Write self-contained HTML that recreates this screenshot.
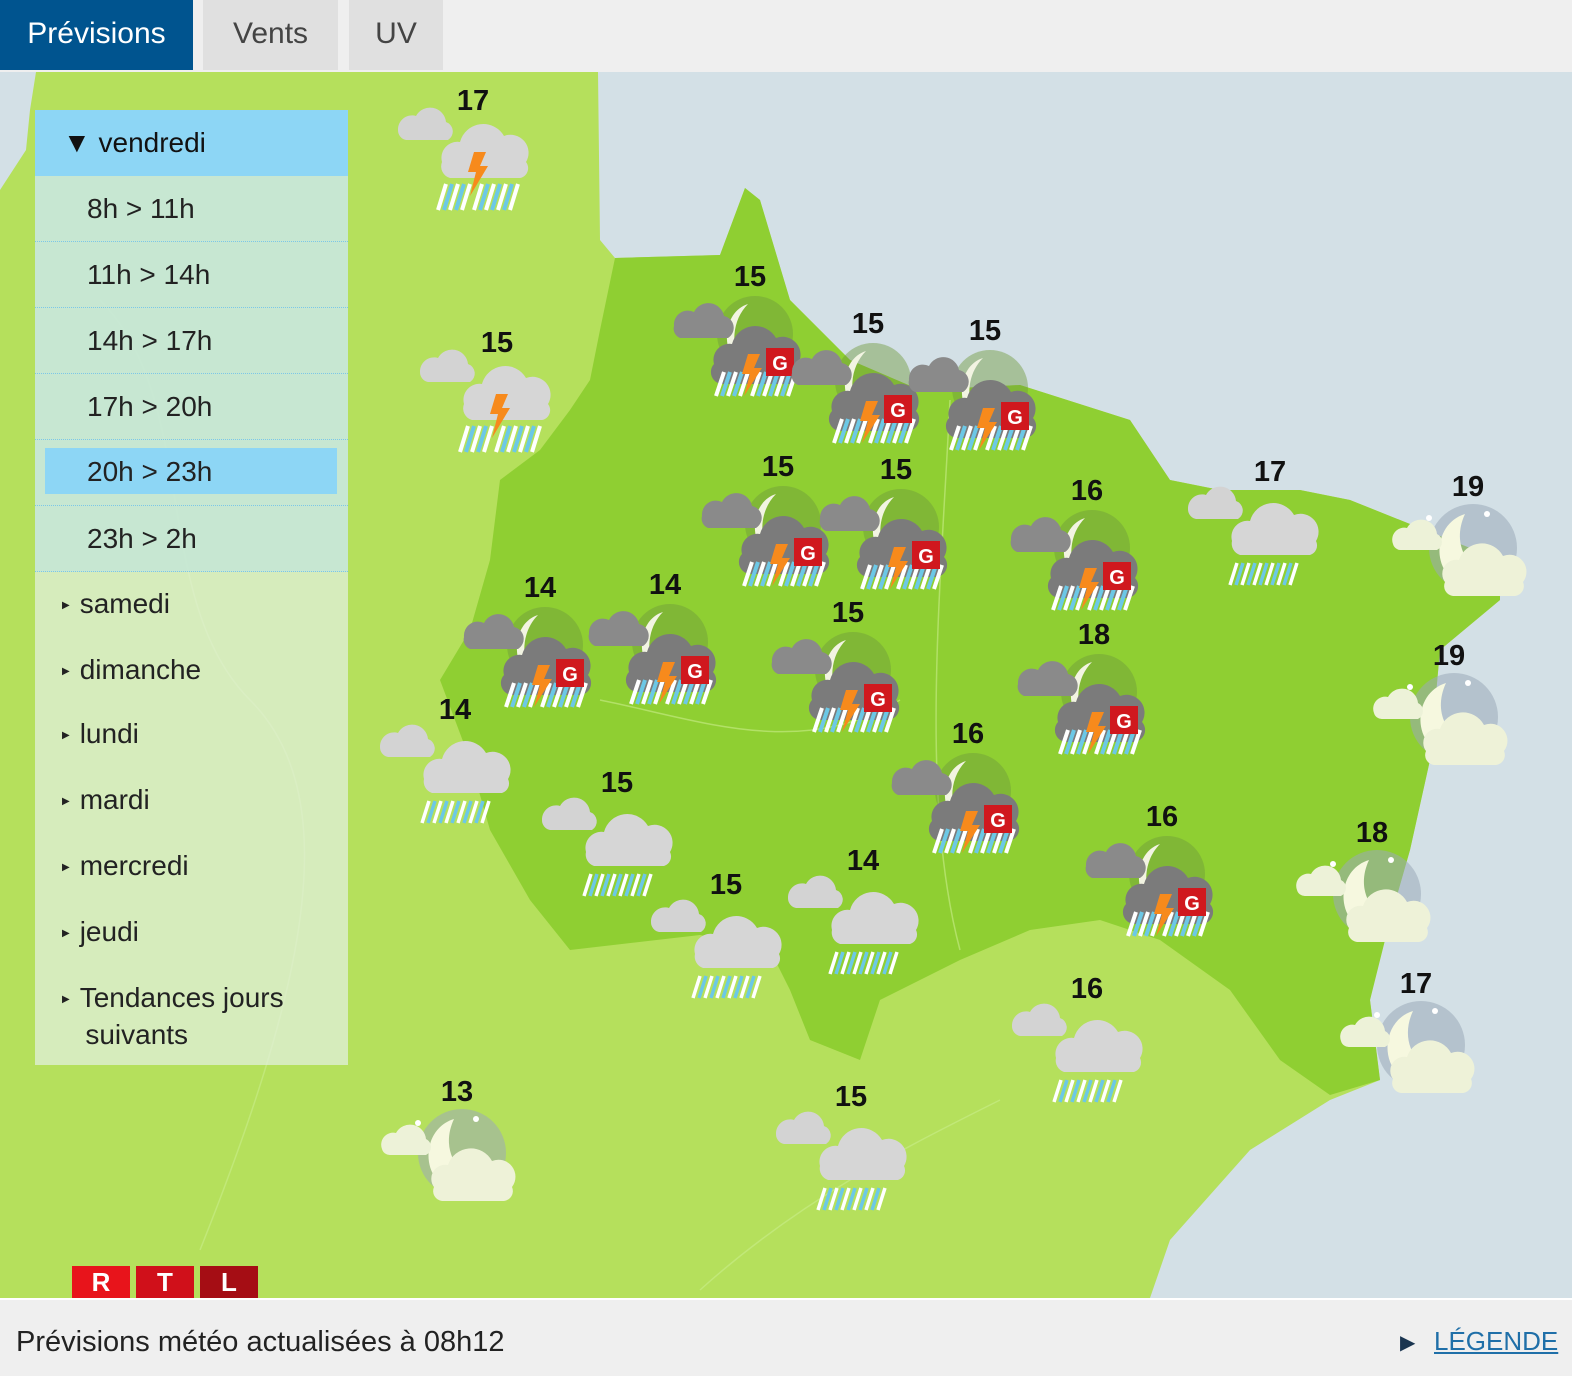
<!DOCTYPE html>
<html><head><meta charset="utf-8"><style>
*{margin:0;padding:0;box-sizing:border-box}
body{width:1572px;height:1376px;overflow:hidden;background:#efefef;font-family:"Liberation Sans",sans-serif;position:relative}
.tabs{position:absolute;left:0;top:0;width:1572px;height:70px;background:#efefef}
.tab{position:absolute;top:0;height:70px;line-height:68px;text-align:center;font-size:30px;color:#444;background:#e0e0e0}
.map{position:absolute;left:0;top:72px;width:1572px;height:1226px}
.side{position:absolute;left:35px;top:110px;width:313px;height:955px;background:rgba(225,240,220,0.75)}
.hd{position:absolute;left:35px;top:110px;width:313px;height:66px;background:#8dd6f5;font-size:28px;line-height:66px;padding-left:28px;color:#111}
.it{position:absolute;left:35px;width:313px;height:66px;font-size:28px;line-height:66px;padding-left:52px;color:#222;background:rgba(195,230,215,0.8);border-bottom:1px dotted #7cc7e8}
.sel{position:absolute;left:45px;top:448px;width:292px;height:46px;background:#8dd6f5}
.d{position:absolute;left:62px;font-size:28px;color:#222}
.d b{font-size:10px;font-weight:normal;margin-right:10px;vertical-align:middle}
.rtl{position:absolute;top:1266px;width:58px;height:32px;color:#fff;font-weight:bold;font-size:26px;text-align:center;line-height:32px}
.foot{position:absolute;left:0;top:1298px;width:1572px;height:78px;background:#efefef;border-top:2px solid #fff}
</style></head><body>
<div class="tabs">
<div class="tab" style="left:0;width:193px;background:#00548f;color:#fff">Prévisions</div>
<div class="tab" style="left:203px;width:135px">Vents</div>
<div class="tab" style="left:349px;width:94px">UV</div>
</div>
<svg class="map" viewBox="0 72 1572 1226" xmlns="http://www.w3.org/2000/svg">
<defs>
<g id="storm">
<circle cx="85" cy="58" r="38" fill="#6f9a3c" opacity="0.45"/>
<path d="M78 28 C52 36 50 78 72 92 C60 70 62 44 78 28Z" fill="#f2f4e2"/>
<path d="M4 50 a14 14 0 0 1 20-14 a16 16 0 0 1 30 4 a12 12 0 0 1 4 22 H10 a10 10 0 0 1-6-12Z" fill="#8a8a8a"/>
<path d="M44 88 a16 16 0 0 1 18-20 a24 24 0 0 1 44-6 a18 18 0 0 1 22 26 a12 12 0 0 1-8 20 H52 a12 12 0 0 1-8-20Z" fill="#7b7b7b"/>
<g stroke-width="4"><path d="M46 120 l8-24 M58 120 l8-24 M70 120 l8-24 M82 120 l8-24 M94 120 l8-24 M106 120 l8-24 M118 120 l8-24" stroke="#fff"/><path d="M52 120 l8-24 M64 120 l8-24 M88 120 l8-24 M100 120 l8-24 M112 120 l8-24" stroke="#6cc8e6"/></g>
<path d="M78 78 L90 78 L84 92 L92 92 L74 120 L80 98 L72 98Z" fill="#f78a1c"/>
<rect x="96" y="72" width="28" height="28" fill="#d0181e"/>
<text x="110" y="94" font-size="20" font-weight="bold" fill="#fff" text-anchor="middle" font-family="Liberation Sans">G</text>
</g>
<g id="stormday">
<path d="M0 30 a14 14 0 0 1 18-14 a16 16 0 0 1 30 6 a10 10 0 0 1 2 18 H8 a10 10 0 0 1-8-10Z" fill="#d3d3d3"/>
<path d="M44 62 a16 16 0 0 1 18-20 a24 24 0 0 1 44-6 a18 18 0 0 1 22 26 a10 10 0 0 1-6 16 H52 a12 12 0 0 1-8-16Z" fill="#d6d6d6"/>
<g stroke-width="4"><path d="M40 110 l8-26 M52 110 l8-26 M64 110 l8-26 M76 110 l8-26 M88 110 l8-26 M100 110 l8-26 M112 110 l8-26" stroke="#fff"/><path d="M46 110 l8-26 M58 110 l8-26 M82 110 l8-26 M94 110 l8-26 M106 110 l8-26" stroke="#6cc8e6"/></g>
<path d="M76 52 L88 52 L82 66 L90 66 L72 96 L78 72 L70 72Z" fill="#f78a1c"/>
</g>
<g id="cloudrain">
<path d="M0 38 a14 14 0 0 1 18-14 a16 16 0 0 1 30 6 a10 10 0 0 1 2 18 H8 a10 10 0 0 1-8-10Z" fill="#d3d3d3"/>
<path d="M44 70 a16 16 0 0 1 18-20 a24 24 0 0 1 44-6 a18 18 0 0 1 22 26 a10 10 0 0 1-6 14 H52 a12 12 0 0 1-8-14Z" fill="#d6d6d6"/>
<g stroke-width="3.5"><path d="M42 114 l7-22 M54 114 l7-22 M66 114 l7-22 M78 114 l7-22 M90 114 l7-22 M102 114 l7-22" stroke="#fff"/><path d="M48 114 l7-22 M60 114 l7-22 M72 114 l7-22 M84 114 l7-22 M96 114 l7-22" stroke="#6cc8e6"/></g>
</g>
<g id="night">
<circle cx="80" cy="62" r="44" fill="#9aa9b8" opacity="0.55"/>
<circle cx="36" cy="32" r="3" fill="#fff"/><circle cx="94" cy="28" r="3" fill="#fff"/>
<path d="M72 28 C38 38 36 94 78 102 C98 104 108 94 112 88 C80 94 56 62 72 28Z" fill="#f6f8df"/>
<path d="M0 58 a12 12 0 0 1 14-16 a16 16 0 0 1 30 6 a9 9 0 0 1 0 16 H8 a8 8 0 0 1-8-6Z" fill="#edf2d8"/>
<path d="M52 96 a14 14 0 0 1 14-22 a24 24 0 0 1 44-4 a17 17 0 0 1 20 26 a10 10 0 0 1-8 14 H60 a10 10 0 0 1-8-14Z" fill="#eef2d8"/>
</g>
</defs>
<rect x="0" y="72" width="1572" height="1226" fill="#b5e05c"/>
<path d="M0 72 H36 L30 110 L26 150 L0 190Z" fill="#d3e0e6"/>
<path d="M598 72 H1572 V1298 H1150 L1170 1240 L1250 1150 L1330 1100 L1380 1080 L1370 1000 L1390 920 L1410 850 L1430 760 L1440 650 L1500 600 L1500 560 L1400 520 L1350 500 L1300 490 L1220 490 L1170 480 L1130 420 L1020 385 L920 390 L850 360 L790 300 L760 200 L745 188 L720 255 L615 258 L600 240Z" fill="#d3e0e6"/>
<path d="M615 258 L720 255 L745 188 L760 200 L790 300 L850 360 L920 390 L1020 385 L1130 420 L1170 480 L1220 490 L1300 490 L1350 500 L1400 520 L1500 560 L1500 600 L1440 650 L1430 760 L1410 850 L1390 920 L1370 1000 L1380 1080 L1330 1095 L1280 1060 L1230 990 L1160 940 L1100 920 L1030 930 L960 960 L880 1000 L860 1060 L810 1040 L790 990 L770 950 L700 935 L570 950 L530 900 L490 830 L470 760 L440 680 L470 630 L490 560 L500 480 L540 450 L570 410 L590 380 L600 330Z" fill="#8fcf32"/>
<g fill="none" stroke="#c9ec8a" stroke-width="1.5" opacity="0.6">
<path d="M100 300 C200 400 150 600 250 700 S300 1000 200 1250"/>
<path d="M1000 1100 C900 1150 800 1200 700 1290"/>
<path d="M950 400 C940 600 920 800 960 950"/>
<path d="M600 700 C700 720 800 760 900 700"/>
</g>
<use href="#stormday" x="398" y="100"/>
<use href="#stormday" x="420" y="342"/>
<g>
<use href="#storm" x="670" y="276"/><use href="#storm" x="788" y="323"/><use href="#storm" x="905" y="330"/>
<use href="#storm" x="698" y="466"/><use href="#storm" x="816" y="469"/><use href="#storm" x="1007" y="490"/>
<use href="#storm" x="460" y="587"/><use href="#storm" x="585" y="584"/><use href="#storm" x="768" y="612"/>
<use href="#storm" x="1014" y="634"/><use href="#storm" x="888" y="733"/><use href="#storm" x="1082" y="816"/>
</g>
<use href="#cloudrain" x="380" y="709"/><use href="#cloudrain" x="542" y="782"/><use href="#cloudrain" x="651" y="884"/>
<use href="#cloudrain" x="788" y="860"/><use href="#cloudrain" x="1012" y="988"/><use href="#cloudrain" x="776" y="1096"/>
<use href="#cloudrain" x="1188" y="471"/>
<use href="#night" x="1393" y="486"/><use href="#night" x="1374" y="655"/><use href="#night" x="1297" y="832"/>
<use href="#night" x="1341" y="983"/><use href="#night" x="382" y="1091"/>
<g font-family="Liberation Sans" font-weight="bold" font-size="29" fill="#111" text-anchor="middle">
<text x="473" y="110">17</text><text x="497" y="352">15</text>
<text x="750" y="286">15</text><text x="868" y="333">15</text><text x="985" y="340">15</text>
<text x="778" y="476">15</text><text x="896" y="479">15</text><text x="1087" y="500">16</text>
<text x="540" y="597">14</text><text x="665" y="594">14</text><text x="848" y="622">15</text>
<text x="1094" y="644">18</text><text x="968" y="743">16</text><text x="1162" y="826">16</text>
<text x="455" y="719">14</text><text x="617" y="792">15</text><text x="726" y="894">15</text>
<text x="863" y="870">14</text><text x="1087" y="998">16</text><text x="851" y="1106">15</text>
<text x="1270" y="481">17</text><text x="1468" y="496">19</text><text x="1449" y="665">19</text>
<text x="1372" y="842">18</text><text x="1416" y="993">17</text><text x="457" y="1101">13</text>
</g>
</svg>
<div class="side"></div>
<div class="hd">▼ vendredi</div>
<div class="it" style="top:176px">8h &gt; 11h</div>
<div class="it" style="top:242px">11h &gt; 14h</div>
<div class="it" style="top:308px">14h &gt; 17h</div>
<div class="it" style="top:374px">17h &gt; 20h</div>
<div class="it" style="top:440px"></div>
<div class="sel"></div>
<div style="position:absolute;left:87px;top:456px;font-size:28px;color:#222">20h &gt; 23h</div>
<div class="it" style="top:506px">23h &gt; 2h</div>
<div class="d" style="top:588px"><b>▶</b>samedi</div>
<div class="d" style="top:654px"><b>▶</b>dimanche</div>
<div class="d" style="top:718px"><b>▶</b>lundi</div>
<div class="d" style="top:784px"><b>▶</b>mardi</div>
<div class="d" style="top:850px"><b>▶</b>mercredi</div>
<div class="d" style="top:916px"><b>▶</b>jeudi</div>
<div class="d" style="top:980px;line-height:35px"><b>▶</b>Tendances jours<br>&nbsp;&nbsp;&nbsp;suivants</div>
<div class="rtl" style="left:72px;background:#e8141b">R</div>
<div class="rtl" style="left:136px;background:#d0101a">T</div>
<div class="rtl" style="left:200px;background:#a50d14">L</div>
<div class="foot">
<div style="position:absolute;left:16px;top:26px;font-size:29px;color:#222">Prévisions météo actualisées à 08h12</div>
<div style="position:absolute;left:1400px;top:30px;font-size:20px;color:#1a3550">▶</div>
<div style="position:absolute;left:1434px;top:26px;font-size:26px;color:#1f6fa8;text-decoration:underline">LÉGENDE</div>
</div>
</body></html>
